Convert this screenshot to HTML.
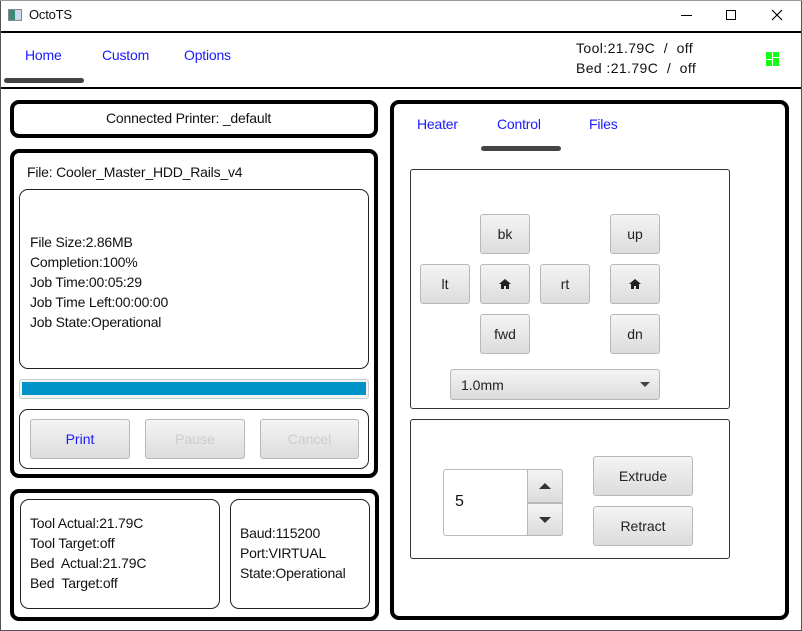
<!DOCTYPE html>
<html><head><meta charset="utf-8"><style>
*{box-sizing:border-box;margin:0;padding:0}
body{width:802px;height:631px;background:#fff;position:relative;overflow:hidden;font-family:"Liberation Sans",sans-serif;font-size:14px;color:#111}
.a{position:absolute}
.thick{position:absolute;border:4px solid #000;border-radius:9px;background:#fff}
.thin{position:absolute;border:1px solid #222;border-radius:9px;background:#fff}
.btn{position:absolute;border:1px solid #b8b8b8;border-radius:3px;background:linear-gradient(#f4f4f4,#dcdcdc);display:flex;align-items:center;justify-content:center;font-size:14px;color:#222}
.blue{color:#1a1aff}
.t{position:absolute;white-space:nowrap;font-size:14px;letter-spacing:-0.2px}
</style></head><body>
<div class="a" style="left:0;top:0;width:802px;height:631px;border:1px solid #555;border-top:none"></div>
<div class="a" style="left:0;top:0;width:802px;height:1px;background:#999"></div>
<div class="a" style="left:8px;top:9px;width:14px;height:12px;border:1px solid #888;background:linear-gradient(90deg,#3a8a7a 50%,#c8d8e8 50%)"></div>
<div class="t" style="left:29px;top:7px;font-size:13px">OctoTS</div>
<div class="a" style="left:681px;top:15px;width:11px;height:1px;background:#000"></div>
<div class="a" style="left:726px;top:10px;width:10px;height:10px;border:1px solid #000"></div>
<svg class="a" style="left:771px;top:9px" width="12" height="12" viewBox="0 0 12 12"><path d="M1 1L11 11M11 1L1 11" stroke="#000" stroke-width="1.2"/></svg>
<div class="a" style="left:1px;top:31px;width:800px;height:2px;background:#000"></div>
<div class="t blue" style="left:25px;top:47px">Home</div>
<div class="t blue" style="left:102px;top:47px">Custom</div>
<div class="t blue" style="left:184px;top:47px">Options</div>
<div class="a" style="left:4px;top:78px;width:80px;height:5px;border-radius:3px;background:#444"></div>
<div class="t" style="left:576px;top:40px;letter-spacing:0.4px">Tool:21.79C&nbsp; /&nbsp; off</div>
<div class="t" style="left:576px;top:60px;letter-spacing:0.4px">Bed :21.79C&nbsp; /&nbsp; off</div>
<div class="a" style="left:766px;top:52px;width:6px;height:7px;background:#1f1"></div>
<div class="a" style="left:773px;top:52px;width:6px;height:5px;background:#1f1"></div>
<div class="a" style="left:766px;top:60px;width:6px;height:6px;background:#1f1"></div>
<div class="a" style="left:773px;top:58px;width:6px;height:8px;background:#1f1"></div>
<div class="a" style="left:1px;top:87px;width:800px;height:2px;background:#000"></div>
<div class="thick" style="left:10px;top:100px;width:368px;height:38px"></div>
<div class="t" style="left:106px;top:110px">Connected Printer: _default</div>
<div class="thick" style="left:10px;top:149px;width:368px;height:329px"></div>
<div class="t" style="left:27px;top:164px">File: Cooler_Master_HDD_Rails_v4</div>
<div class="thin" style="left:19px;top:189px;width:350px;height:180px"></div>
<div class="t" style="left:30px;top:234px">File Size:2.86MB</div>
<div class="t" style="left:30px;top:254px">Completion:100%</div>
<div class="t" style="left:30px;top:274px">Job Time:00:05:29</div>
<div class="t" style="left:30px;top:294px">Job Time Left:00:00:00</div>
<div class="t" style="left:30px;top:314px">Job State:Operational</div>
<div class="a" style="left:19px;top:379px;width:350px;height:20px;border:1px solid #ccc;border-radius:3px;background:#f4f4f4"></div>
<div class="a" style="left:22px;top:382px;width:344px;height:13px;background:#0093c8"></div>
<div class="thin" style="left:19px;top:409px;width:350px;height:60px"></div>
<div class="btn blue" style="left:30px;top:419px;width:100px;height:40px;color:#1a1aff">Print</div>
<div class="btn" style="left:145px;top:419px;width:100px;height:40px;color:#ccc">Pause</div>
<div class="btn" style="left:260px;top:419px;width:99px;height:40px;color:#ccc">Cancel</div>
<div class="thick" style="left:10px;top:489px;width:369px;height:132px"></div>
<div class="thin" style="left:20px;top:499px;width:200px;height:110px"></div>
<div class="t" style="left:30px;top:515px">Tool Actual:21.79C</div>
<div class="t" style="left:30px;top:535px">Tool Target:off</div>
<div class="t" style="left:30px;top:555px">Bed&nbsp; Actual:21.79C</div>
<div class="t" style="left:30px;top:575px">Bed&nbsp; Target:off</div>
<div class="thin" style="left:230px;top:499px;width:140px;height:110px"></div>
<div class="t" style="left:240px;top:525px">Baud:115200</div>
<div class="t" style="left:240px;top:545px">Port:VIRTUAL</div>
<div class="t" style="left:240px;top:565px">State:Operational</div>
<div class="thick" style="left:390px;top:100px;width:399px;height:520px"></div>
<div class="t blue" style="left:417px;top:116px">Heater</div>
<div class="t blue" style="left:497px;top:116px">Control</div>
<div class="t blue" style="left:589px;top:116px">Files</div>
<div class="a" style="left:481px;top:146px;width:80px;height:5px;border-radius:3px;background:#444"></div>
<div class="a" style="left:410px;top:169px;width:320px;height:240px;border:1px solid #333;border-radius:3px"></div>
<div class="btn" style="left:480px;top:214px;width:50px;height:40px">bk</div>
<div class="btn" style="left:610px;top:214px;width:50px;height:40px">up</div>
<div class="btn" style="left:420px;top:264px;width:50px;height:40px">lt</div>
<div class="btn" style="left:480px;top:264px;width:50px;height:40px"><svg width="12" height="10" viewBox="0 0 12 10"><path d="M6 0L0 5h2v5h3V7h2v3h3V5h2z" fill="#222"/></svg></div>
<div class="btn" style="left:540px;top:264px;width:50px;height:40px">rt</div>
<div class="btn" style="left:610px;top:264px;width:50px;height:40px"><svg width="12" height="10" viewBox="0 0 12 10"><path d="M6 0L0 5h2v5h3V7h2v3h3V5h2z" fill="#222"/></svg></div>
<div class="btn" style="left:480px;top:314px;width:50px;height:40px">fwd</div>
<div class="btn" style="left:610px;top:314px;width:50px;height:40px">dn</div>
<div class="btn" style="left:450px;top:369px;width:210px;height:31px;justify-content:flex-start;padding-left:10px">1.0mm</div>
<div class="a" style="left:640px;top:382px;width:0;height:0;border-left:5px solid transparent;border-right:5px solid transparent;border-top:5px solid #444"></div>
<div class="a" style="left:410px;top:419px;width:320px;height:140px;border:1px solid #333;border-radius:3px"></div>
<div class="a" style="left:443px;top:469px;width:120px;height:67px;border:1px solid #bbb;border-radius:3px;background:#fff"></div>
<div class="t" style="left:455px;top:493px;font-size:16px">5</div>
<div class="btn" style="left:527px;top:469px;width:36px;height:34px;border-radius:0 3px 0 0"><div style="width:0;height:0;border-left:6px solid transparent;border-right:6px solid transparent;border-bottom:6px solid #333"></div></div>
<div class="btn" style="left:527px;top:503px;width:36px;height:33px;border-radius:0 0 3px 0"><div style="width:0;height:0;border-left:6px solid transparent;border-right:6px solid transparent;border-top:6px solid #333"></div></div>
<div class="btn" style="left:593px;top:456px;width:100px;height:40px">Extrude</div>
<div class="btn" style="left:593px;top:506px;width:100px;height:40px">Retract</div>
</body></html>
